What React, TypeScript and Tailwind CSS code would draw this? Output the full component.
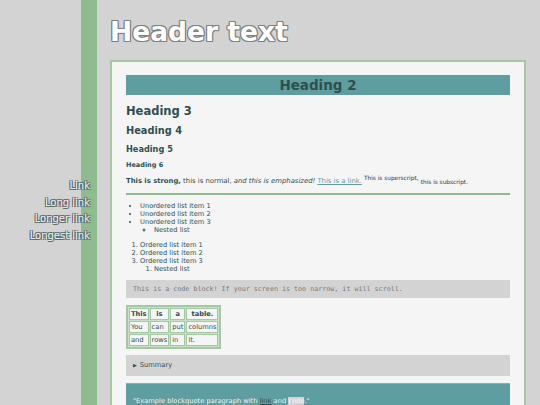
export default function App() {
  return (
    <div className="min-h-screen bg-[#d3d3d3] flex font-['DejaVu_Sans',Verdana,sans-serif] text-[#2f4f4f]">
      <Sidebar />

      <div className="flex-1 min-w-0 pl-[13px] pr-[14px]">
        {/* Header */}
        <header className="h-[60px] pt-[16px]">
          <h1 className="text-[26.5px] leading-[31px] font-bold text-white [text-shadow:1px_1px_0_#7a8282,-1px_-1px_0_#7a8282,1px_-1px_0_#7a8282,-1px_1px_0_#7a8282,0_1px_0_#7a8282,0_-1px_0_#7a8282,1px_0_0_#7a8282,-1px_0_0_#7a8282]">
            Header text
          </h1>
        </header>

        {/* Main box */}
        <main className="border-2 border-[#a3c8a3] bg-[#f5f5f5] px-[14px] pt-[13px] pb-[14px] text-[6.7px]">
          <h2 className="bg-[#5f9ea0] h-[20px] leading-[20px] text-center text-[13.5px] font-bold">
            Heading 2
          </h2>
          <h3 className="mt-[10px] text-[11.5px] leading-[13.4px] font-bold">Heading 3</h3>
          <h4 className="mt-[7px] text-[9.8px] leading-[11.4px] font-bold">Heading 4</h4>
          <h5 className="mt-[8px] text-[8.2px] leading-[9.5px] font-bold">Heading 5</h5>
          <h6 className="mt-[8px] text-[6.5px] leading-[7.6px] font-bold">Heading 6</h6>

          <p className="mt-[7px] leading-[8px] text-[6.85px]">
            <strong>This is strong,</strong> this is normal, <em>and this is emphasized!</em>{' '}
            <a className="text-[#5f9ea0] underline">This is a link.</a>{' '}
            <sup className="text-[5.8px] text-[#333]">This is superscript,</sup>{' '}
            <sub className="text-[5.8px] text-[#333]">this is subscript.</sub>
          </p>

          <hr className="mt-[8px] border-0 h-[2px] bg-[#8fbc8f]" />

          <ul className="mt-[7px] list-disc pl-[14px] leading-[8px]">
            <li>Unordered list item 1</li>
            <li>Unordered list item 2</li>
            <li>
              Unordered list item 3
              <ul className="list-[circle] pl-[14px]">
                <li>Nested list</li>
              </ul>
            </li>
          </ul>

          <ol className="mt-[7px] list-decimal pl-[14px] leading-[8px]">
            <li>Ordered list item 1</li>
            <li>Ordered list item 2</li>
            <li>
              Ordered list item 3
              <ol className="list-decimal pl-[14px]">
                <li>Nested list</li>
              </ol>
            </li>
          </ol>

          <pre className="mt-[7px] bg-[#d3d3d3] h-[18px] leading-[18px] px-[7px] font-['DejaVu_Sans_Mono',monospace] text-[6.7px] text-[#7a7a7a] overflow-hidden">
            This is a code block! If your screen is too narrow, it will scroll.
          </pre>

          <table className="mt-[7px] border-separate border-spacing-[1px] border-2 border-[#a3c8a3] bg-[#c9e0c9] leading-[10px]">
            <thead>
              <tr>
                <Th>This</Th>
                <Th>is</Th>
                <Th>a</Th>
                <Th>table.</Th>
              </tr>
            </thead>
            <tbody>
              <tr>
                <Td>You</Td>
                <Td>can</Td>
                <Td>put</Td>
                <Td>columns</Td>
              </tr>
              <tr>
                <Td>and</Td>
                <Td>rows</Td>
                <Td>in</Td>
                <Td>it.</Td>
              </tr>
            </tbody>
          </table>

          <div className="mt-[6px] bg-[#d3d3d3] h-[21px] flex items-center px-[7px] gap-[3px]">
            <span className="text-[5px]">▶</span>
            <span>Summary</span>
          </div>

          <blockquote className="mt-[7px] bg-[#5f9ea0] border-t border-[#7fb3b5] px-[7px] pt-[13px] pb-[14px] leading-[8px] text-[#e6f2f2]">
            "Example blockquote paragraph with{' '}
            <a className="text-[#2f4f4f] underline">link</a> and{' '}
            <code className="bg-[#d3d3d3] text-[#f5f5f5] font-['DejaVu_Sans_Mono',monospace]">code</code>."
          </blockquote>
        </main>
      </div>
    </div>
  );
}

function Sidebar() {
  const links = ['Link', 'Long link', 'Longer link', 'Longest link'];
  return (
    <nav className="w-[97px] shrink-0 bg-[linear-gradient(to_right,#d3d3d3_81px,#8fbc8f_81px)] pt-[178px] pr-[7px] text-right text-[10px] leading-[16.5px]">
      {links.map((l) => (
        <a
          key={l}
          className="block text-[#eef0f0] [text-shadow:1px_1px_0_#5a6c6c,-1px_-1px_0_#5a6c6c,1px_-1px_0_#5a6c6c,-1px_1px_0_#5a6c6c]"
        >
          {l}
        </a>
      ))}
    </nav>
  );
}

function Th({ children }: { children: React.ReactNode }) {
  return (
    <th className="border border-[#a3c8a3] bg-[#f5f5f5] px-[1px] py-0 font-bold text-center">
      {children}
    </th>
  );
}

function Td({ children }: { children: React.ReactNode }) {
  return (
    <td className="border border-[#a3c8a3] bg-[#f5f5f5] px-[1px] py-0 text-left">
      {children}
    </td>
  );
}
